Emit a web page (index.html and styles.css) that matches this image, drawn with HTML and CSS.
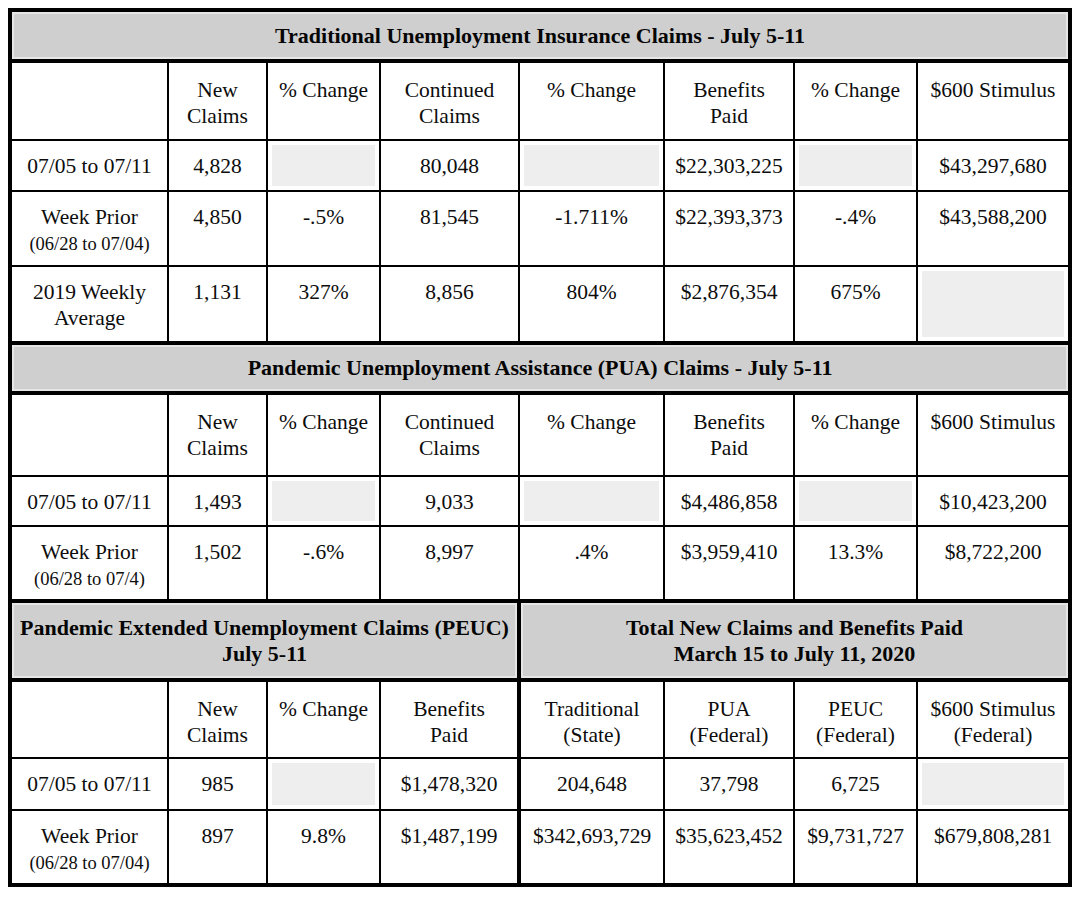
FILE: index.html
```html
<!DOCTYPE html>
<html lang="en">
<head>
<meta charset="utf-8">
<title>Unemployment Claims - July 5-11</title>
<link rel="stylesheet" href="styles.css">
</head>
<body>
<table class="claims">
  <colgroup>
    <col class="c1"><col class="c2"><col class="c3"><col class="c4">
    <col class="c5"><col class="c6"><col class="c7"><col class="c8">
  </colgroup>
  <tbody>
    <tr class="title t1"><td colspan="8">Traditional Unemployment Insurance Claims - July 5-11</td></tr>
    <tr class="head h1">
      <td></td><td>New<br>Claims</td><td>% Change</td><td>Continued<br>Claims</td>
      <td>% Change</td><td>Benefits<br>Paid</td><td>% Change</td><td>$600 Stimulus</td>
    </tr>
    <tr class="r1 ra">
      <td>07/05 to 07/11</td><td>4,828</td><td class="blank"></td><td>80,048</td>
      <td class="blank"></td><td>$22,303,225</td><td class="blank"></td><td>$43,297,680</td>
    </tr>
    <tr class="r2 rb">
      <td>Week Prior<br><span class="sub">(06/28 to 07/04)</span></td><td>4,850</td><td>-.5%</td><td>81,545</td>
      <td>-1.711%</td><td>$22,393,373</td><td>-.4%</td><td>$43,588,200</td>
    </tr>
    <tr class="r2 rc">
      <td>2019 Weekly<br>Average</td><td>1,131</td><td>327%</td><td>8,856</td>
      <td>804%</td><td>$2,876,354</td><td>675%</td><td class="blank"></td>
    </tr>

    <tr class="title t2"><td colspan="8">Pandemic Unemployment Assistance (PUA) Claims - July 5-11</td></tr>
    <tr class="head h2">
      <td></td><td>New<br>Claims</td><td>% Change</td><td>Continued<br>Claims</td>
      <td>% Change</td><td>Benefits<br>Paid</td><td>% Change</td><td>$600 Stimulus</td>
    </tr>
    <tr class="r1 rd">
      <td>07/05 to 07/11</td><td>1,493</td><td class="blank"></td><td>9,033</td>
      <td class="blank"></td><td>$4,486,858</td><td class="blank"></td><td>$10,423,200</td>
    </tr>
    <tr class="r2 re">
      <td>Week Prior<br><span class="sub">(06/28 to 07/4)</span></td><td>1,502</td><td>-.6%</td><td>8,997</td>
      <td>.4%</td><td>$3,959,410</td><td>13.3%</td><td>$8,722,200</td>
    </tr>

    <tr class="title t3">
      <td colspan="4">Pandemic Extended Unemployment Claims (PEUC)<br>July 5-11</td>
      <td colspan="4" class="split">Total New Claims and Benefits Paid<br>March 15 to July 11, 2020</td>
    </tr>
    <tr class="head h3">
      <td></td><td>New<br>Claims</td><td>% Change</td><td>Benefits<br>Paid</td>
      <td class="split">Traditional<br>(State)</td><td>PUA<br>(Federal)</td><td>PEUC<br>(Federal)</td><td>$600 Stimulus<br>(Federal)</td>
    </tr>
    <tr class="r1 rf">
      <td>07/05 to 07/11</td><td>985</td><td class="blank"></td><td>$1,478,320</td>
      <td class="split">204,648</td><td>37,798</td><td>6,725</td><td class="blank"></td>
    </tr>
    <tr class="r2 rg">
      <td>Week Prior<br><span class="sub">(06/28 to 07/04)</span></td><td>897</td><td>9.8%</td><td>$1,487,199</td>
      <td class="split">$342,693,729</td><td>$35,623,452</td><td>$9,731,727</td><td>$679,808,281</td>
    </tr>
  </tbody>
</table>
</body>
</html>
```

FILE: styles.css
```css
html, body {
  background: #ffffff;
}

body {
  margin: 8px;
  font-family: "Liberation Serif", "Times New Roman", serif;
  color: #0d0d0d;
}

.claims {
  border-collapse: collapse;
  table-layout: fixed;
  width: 1060px;
  border: 4px solid #000;
  font-size: 21.5px;
  line-height: 26px;
}

.c1 { width: 158px; }
.c2 { width: 99px; }
.c3 { width: 113px; }
.c4 { width: 139px; }
.c5 { width: 145px; }
.c6 { width: 130px; }
.c7 { width: 123px; }
.c8 { width: 153px; }

.claims td {
  border: 2px solid #000;
  text-align: center;
  vertical-align: top;
  padding: 12px 2px 0;
  white-space: nowrap;
}

.claims .title td {
  background: #cfcfcf;
  box-shadow: inset 0 0 0 2px #e6e6e6;
  border-top: 4px solid #000;
  border-bottom: 4px solid #000;
  font-weight: bold;
  font-size: 22px;
  vertical-align: middle;
  padding: 0 4px;
  color: #050505;
}

.claims .head td {
  padding-top: 14px;
}

.claims td.blank {
  background: #eeeeee;
  box-shadow: inset 0 0 0 4px #fff;
}

.claims td.split {
  border-left: 4px solid #000;
}

.sub {
  font-size: 18.5px;
}

.t1 { height: 51px; }
.h1 { height: 79px; }
.ra { height: 51px; }
.rb { height: 75px; }
.rc { height: 77px; }
.t2 { height: 50px; }
.h2 { height: 83px; }
.rd { height: 50px; }
.re { height: 75px; }
.t3 { height: 79px; }
.h3 { height: 78px; }
.rf { height: 52px; }
.rg { height: 75px; }
```
